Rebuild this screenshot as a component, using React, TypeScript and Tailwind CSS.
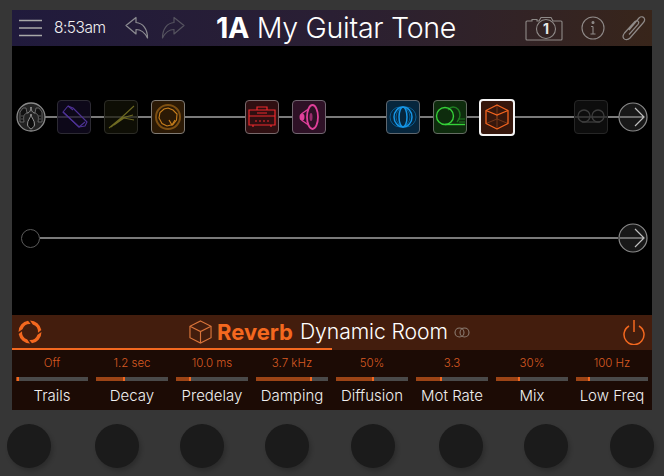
import React from "react";

function Block({ className, children }: { className: string; children: React.ReactNode }) {
  return (
    <div className={`relative shrink-0 w-[34px] h-[34px] rounded-[4px] border-[1.5px] flex items-center justify-center ${className}`}>
      {children}
    </div>
  );
}

function Arrow() {
  return (
    <svg className="relative shrink-0" width="30" height="30" viewBox="0 0 30 30" fill="none">
      <circle cx="15" cy="15" r="14" fill="#181818" stroke="#8a8a8a" strokeWidth="1.2" />
      <path d="M2 15H25M17 6l9 9-9 9" stroke="#c0c0c0" strokeWidth="1.2" />
    </svg>
  );
}

const params = [
  ["Off", "Trails", 2],
  ["1.2 sec", "Decay", 38],
  ["10.0 ms", "Predelay", 18],
  ["3.7 kHz", "Damping", 75],
  ["50%", "Diffusion", 50],
  ["3.3", "Mot Rate", 33],
  ["30%", "Mix", 30],
  ["100 Hz", "Low Freq", 17],
] as const;

const knobs = ["", "ml-[3px]", "", "", "ml-px", "ml-[3px]", "", "ml-px"];
const seg = "M23.5 12A11.5 11.5 0 0 1 14 23.33L11.3 19.97A8 8 0 0 0 19.52 14.74Z";

export default function App() {
  return (
    <div className="w-[664px] h-[476px] bg-[#363636] overflow-hidden pt-[10px] font-['Inter','Liberation_Sans',sans-serif]">
      <div className="mx-[12px] h-[400px] flex flex-col bg-black">
        {/* header */}
        <div className="h-[36px] shrink-0 flex items-center bg-gradient-to-r from-[#201a3c] via-[#2a1f33] to-[#38251a]">
          <div className="w-[183px] shrink-0 flex items-center">
            <svg className="ml-[7px]" width="23" height="20" viewBox="0 0 23 20" stroke="#a8a8a8" strokeWidth="1.3"><path d="M0 2.500H23M0 10H23M0 17.500H23" /></svg>
            <span className="ml-[12px] text-[15.500px] font-light tracking-[-0.5px] text-[#f0f0f0]">8:53am</span>
            <svg className="ml-[20px]" width="24" height="24" viewBox="0 0 24 24" fill="none" stroke="#8d8d92" strokeWidth="1.2"><path d="M1 9.500L11 1.500V6.500C18 7 22.500 13 22.500 22C19.500 16 16 13.500 11 13.500V18Z" strokeLinejoin="round" /></svg>
            <svg className="ml-[12px]" width="24" height="24" viewBox="0 0 24 24" fill="none" stroke="#55535f" strokeWidth="1.2"><path d="M23 9.500L13 1.500V6.500C6 7 1.500 13 1.500 22C4.500 16 8 13.500 13 13.500V18Z" strokeLinejoin="round" /></svg>
          </div>
          <div className="w-[282px] shrink-0 text-center text-[28.600px] leading-[36px] text-white whitespace-nowrap tracking-[-0.3px] font-light">
            <span className="font-bold">1A</span> My Guitar Tone
          </div>
          <div className="flex items-center flex-1">
            <svg className="ml-[48px]" width="38" height="25" viewBox="0 0 38 25" fill="none" stroke="#8f8a88" strokeWidth="1.1">
              <path d="M2 5H7V3.500H12V5H14L16 1.500H26L28 5H36C36.600 5 37 5.400 37 6V23C37 23.600 36.600 24 36 24H2C1.400 24 1 23.600 1 23V6C1 5.400 1.400 5 2 5Z" />
              <circle cx="21" cy="13" r="9.500" />
              <text x="21" y="18" textAnchor="middle" fontSize="14" fontWeight="700" fill="#e8e8e8" stroke="none">1</text>
            </svg>
            <svg className="ml-[18px]" width="24" height="24" viewBox="0 0 24 24" fill="none" stroke="#8f8a88" strokeWidth="1.1">
              <circle cx="12" cy="12" r="11" />
              <path d="M12 10.500V18M9.500 18H14.500M10 10.500H12" />
              <circle cx="12" cy="6.500" r="1" fill="#8f8a88" />
            </svg>
            <svg className="ml-[17px]" width="24" height="26" viewBox="0 0 24 26" fill="none" stroke="#8f8a88" strokeWidth="1.2">
              <path d="M7 15L17 3C19 1 22 1.500 22.500 4C23 5.500 22.500 6.500 21 8L8 23C6 25 3 25 1.800 23.500C0.500 22 1 20 2.500 18L13 6.500C14 5.500 15.500 5.500 16.200 6.300C17 7.200 16.800 8.300 16 9.300L7 19.500" />
            </svg>
          </div>
        </div>

        {/* signal chains */}
        <div className="h-[269px] shrink-0 bg-black pt-[54px] flex flex-col gap-[89px]">
          <div className="relative h-[34px] flex items-center gap-[60px] pl-[4px]">
            <div className="absolute left-[18px] right-[20px] top-[16px] h-[2px] bg-[#7a7a7a]" />

            <div className="flex items-center gap-[13px]">
              <svg className="relative shrink-0 -mr-[2px]" width="30" height="30" viewBox="0 0 30 30" fill="none">
                <circle cx="15" cy="15" r="14" fill="#222" stroke="#8a8a8a" strokeWidth="1.3" />
                <path d="M15 12C15 16 11 18 11.500 23C12 25 14 26.500 15 27C16 26.500 18 25 18.500 23C19 18 15 16 15 12Z" fill="#0c0c0c" stroke="#a5a5a5" strokeWidth="0.9" />
                <path d="M11 11C13 11 15 9 15 5C15 9 17 11 19 11" stroke="#a5a5a5" strokeWidth="0.9" />
                <path d="M4 10L7 6H10L11 11C8 12 7 14 8 20H4ZM26 10L23 6H20L19 11C22 12 23 14 22 20H26Z" fill="#111" stroke="#777" strokeWidth="0.8" />
                <path d="M5 14H8M5 17H8M22 14H25M22 17H25" stroke="#555" />
              </svg>
              <Block className="border-[#2c2a33] bg-[#120c24]/70">
                <svg width="28" height="28" viewBox="0 0 28 28" fill="none" stroke="#4e3295" strokeWidth="1.1"><path d="M3 9L8 3L13 5L27 19L25 23L19 24Z" strokeLinejoin="round" /><path d="M3 9L19 24L25 19M8 3L13 7" /></svg>
              </Block>
              <Block className="border-[#2c2c26] bg-[#141407]/70">
                <svg width="28" height="28" viewBox="0 0 28 28" fill="none" stroke="#6e6a22" strokeWidth="1.1"><path d="M2 25L14 15L27 3M4 24L15 15L26 12M7 22L17 15L27 17" /></svg>
              </Block>
              <Block className="border-[#7f7a74] bg-[#2b1905]">
                <svg width="30" height="30" viewBox="0 0 30 30" fill="none" stroke="#c97f1c" strokeWidth="1.2"><circle cx="15" cy="15" r="12" strokeWidth="2" stroke="#7d4f12" /><path d="M15 6L20 8L24 12L23.500 18L20 22.500L14 24L9 21.500L6 16L7 10.500L11 7Z" strokeWidth="1.1" /><path d="M16 18L19 23L22 18" /></svg>
              </Block>
            </div>

            <div className="flex items-center gap-[13px]">
              <Block className="border-[#77696b] bg-[#2f0f11]">
                <svg width="28" height="26" viewBox="0 0 28 26" fill="none" stroke="#ee2a2e" strokeWidth="1.200"><path d="M1 6H27V21H1ZM1 12H27M9 6V3H19V6M9 9H19M5 21V23M23 21V23" /><path d="M7 17H21" strokeDasharray="2 2" /></svg>
              </Block>
              <Block className="border-[#716670] bg-[#2e1126]">
                <svg width="24" height="28" viewBox="0 0 24 28" fill="none" stroke="#e0409a" strokeWidth="1.800"><ellipse cx="15.500" cy="14" rx="5.500" ry="12" /><path d="M11.500 6L5 10.500V17.500L11.500 22" strokeWidth="1.400" /><ellipse cx="5" cy="14" rx="2.500" ry="3.500" fill="#e0409a" strokeWidth="0" /><ellipse cx="14" cy="14" rx="1.500" ry="4" fill="#e0409a" fillOpacity="0.6" strokeWidth="0" /></svg>
              </Block>
            </div>

            <div className="flex items-center gap-[13px]">
              <Block className="border-[#5f666d] bg-[#06263d]">
                <svg width="30" height="24" viewBox="0 0 30 24" fill="none" stroke="#1595e6" strokeWidth="1.500"><ellipse cx="12" cy="12" rx="10" ry="10" stroke="#0a5d92" strokeWidth="1" /><ellipse cx="18" cy="12" rx="10" ry="10" stroke="#0a5d92" strokeWidth="1" /><ellipse cx="15" cy="12" rx="4" ry="10" /><ellipse cx="15" cy="12" rx="9" ry="10" /></svg>
              </Block>
              <Block className="border-[#646b62] bg-[#0e2c0d]">
                <svg width="30" height="26" viewBox="0 0 30 26" fill="none" stroke="#35d138" strokeWidth="1.400"><path d="M13 6C14.500 4 16 3 18 3C22.500 3 25 7 25 11C25 14 24 16 22 18" stroke="#1f7d22" /><path d="M23 15H30M24 18H30" stroke="#1f7d22" strokeWidth="1" /><circle cx="10" cy="12" r="8.500" /><path d="M10 20.500H30" /></svg>
              </Block>
              <div className="relative shrink-0 -ml-px w-[36px] h-[37px] rounded-[4px] border-2 border-[#f4f4f4] bg-[#36170c] flex items-center justify-center">
                <svg width="24" height="26" viewBox="0 0 24 26" fill="none" stroke="#f4651f" strokeWidth="1.300"><path d="M12 11V25M12 1V15M1 19.500L12 15L23 19.500" stroke="#7a3a1a" strokeWidth="0.9" /><path d="M12 1L23 6.500V19.500L12 25L1 19.500V6.500Z" strokeLinejoin="round" /><path d="M1 6.500L12 11L23 6.500" /></svg>
              </div>
            </div>

            <div className="flex items-center gap-[10px] -ml-px">
              <Block className="border-[#262626] bg-[#121212]/70">
                <svg width="28" height="20" viewBox="0 0 28 20" fill="none" stroke="#3d3d3d" strokeWidth="1.300"><circle cx="7" cy="9" r="6" /><circle cx="21" cy="9" r="6" /><path d="M5 15H23" /></svg>
              </Block>
              <Arrow />
            </div>
          </div>

          <div className="flex items-center pl-[9px] pr-[4px]">
            <div className="shrink-0 w-[19px] h-[19px] rounded-full border border-[#5a5a5a] bg-black" />
            <div className="flex-1 h-[2px] bg-[#7a7a7a]" />
            <Arrow />
          </div>
        </div>

        {/* model bar */}
        <div className="h-[33px] pt-px shrink-0 bg-[#431d0d] flex items-center pl-[6px] pr-[7px]">
          <svg className="shrink-0" width="24" height="24" viewBox="0 0 24 24" fill="#f4681f">
            <path d={seg} />
            <path d={seg} transform="rotate(90 12 12)" />
            <path d={seg} transform="rotate(180 12 12)" />
            <path d={seg} transform="rotate(270 12 12)" />
          </svg>
          <div className="flex items-center ml-[147px]">
            <svg width="23" height="24" viewBox="0 0 24 25" fill="none" stroke="#d9743a" strokeWidth="1.200"><path d="M12 1L23 6.500V18.500L12 24L1 18.500V6.500Z" /><path d="M1 6.500L12 12L23 6.500M12 12V24" /></svg>
            <span className="ml-[5px] text-[22px] font-bold text-[#f4681f]">Reverb</span>
            <span className="ml-[7px] text-[21.200px] font-light text-white tracking-[-0.1px]">Dynamic Room</span>
            <svg className="ml-[6px]" width="16" height="11" viewBox="0 0 16 11" fill="none" stroke="#8a7a70" strokeWidth="1.100"><circle cx="5.500" cy="5.500" r="4.500" /><circle cx="10.500" cy="5.500" r="4.500" /></svg>
          </div>
          <svg className="ml-auto shrink-0" width="22" height="26" viewBox="0 0 22 26" fill="none" stroke="#f4681f" strokeWidth="1.500"><path d="M11 1V13" /><path d="M6 7A10 10 0 1 0 16 7" /></svg>
        </div>
        <div className="h-[2px] shrink-0 bg-[#431d0d]">
          <div className="h-full w-1/2 bg-[#f4681f]" />
        </div>

        {/* params */}
        <div className="h-[60px] shrink-0 bg-[#1c0b05] grid grid-cols-8">
          {params.map(([value, label, pct]) => (
            <div key={label} className="flex flex-col items-center">
              <span className="mt-[6px] h-[15px] text-[11.500px] font-light leading-[15px] text-[#d85a22]">{value}</span>
              <div className="mt-[6px] w-[72px] h-[4px] bg-[#4a4a4a] flex">
                <div className="h-full bg-[#9c4416]" style={{ width: `${pct}%` }} />
                <div className="h-full w-[2px] bg-[#f4681f]" />
              </div>
              <span className="mt-[6px] text-[15px] font-light leading-[18px] text-[#efefef] whitespace-nowrap">{label}</span>
            </div>
          ))}
        </div>
      </div>

      {/* knobs */}
      <div className="flex gap-[41px] pl-[7px] mt-[14px]">
        {knobs.map((m, i) => (
          <div key={i} className={`${m} w-[44px] h-[44px] shrink-0 rounded-full bg-[#1b1b1b] shadow-[2px_3px_4px_rgba(0,0,0,0.2)]`} />
        ))}
      </div>
    </div>
  );
}
